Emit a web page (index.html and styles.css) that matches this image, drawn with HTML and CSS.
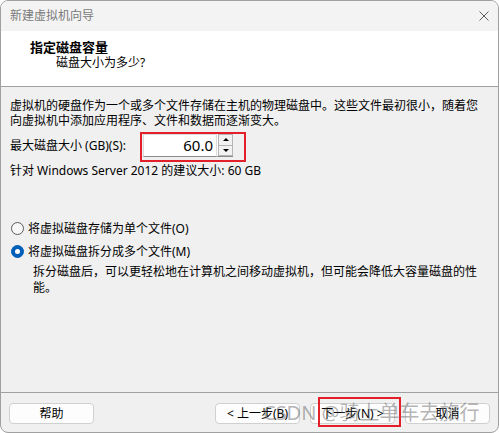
FILE: index.html
```html
<!DOCTYPE html>
<html lang="zh-CN">
<head>
<meta charset="utf-8">
<title>新建虚拟机向导</title>
<link rel="stylesheet" href="styles.css">
</head>
<body>
<div class="window">
  <div class="titlebar">
    <span class="title">新建虚拟机向导</span>
    <svg class="close" width="10" height="10" viewBox="0 0 10 10"><path d="M0.5 0.5 L9.5 9.5 M9.5 0.5 L0.5 9.5" stroke="#5c5c5c" stroke-width="1"/></svg>
  </div>
  <div class="header">
    <div class="h-title">指定磁盘容量</div>
    <div class="h-sub">磁盘大小为多少?</div>
  </div>
  <div class="content">
    <p class="intro">虚拟机的硬盘作为一个或多个文件存储在主机的物理磁盘中。这些文件最初很小，随着您<br>向虚拟机中添加应用程序、文件和数据而逐渐变大。</p>
    <div class="size-row">
      <span class="size-label">最大磁盘大小 (GB)(S):</span>
      <div class="spin">
        <div class="spin-input">60.0</div>
        <div class="spin-btns">
          <span class="spin-btn"><span class="arrow-up"></span></span>
          <span class="spin-btn"><span class="arrow-down"></span></span>
        </div>
      </div>
      <div class="mark mark-spin"></div>
    </div>
    <p class="recommend">针对 Windows Server 2012 的建议大小: 60 GB</p>
    <div class="options">
      <div class="radio-row"><span class="radio"></span>将虚拟磁盘存储为单个文件(O)</div>
      <div class="radio-row second"><span class="radio checked"></span>将虚拟磁盘拆分成多个文件(M)</div>
      <p class="option-desc">拆分磁盘后，可以更轻松地在计算机之间移动虚拟机，但可能会降低大容量磁盘的性<br>能。</p>
    </div>
  </div>
  <div class="footer">
    <button class="btn">帮助</button>
    <div class="nav">
      <button class="btn">&lt; 上一步(B)</button>
      <button class="btn next">下一步(N) &gt;<span class="mark mark-next"></span></button>
      <button class="btn">取消</button>
    </div>
  </div>
  <div class="watermark">CSDN @骑上单车去旅行</div>
</div>
</body>
</html>
```
FILE: styles.css
```css
body {
  margin: 0;
  background: #ffffff;
  font-family: "Noto Sans", "Noto Sans CJK SC", sans-serif;
  font-size: 12px;
  color: #000;
}

.window {
  width: 499px;
  height: 433px;
  box-sizing: border-box;
  border: 1px solid #a0a0a0;
  border-radius: 8px;
  overflow: hidden;
  display: flex;
  flex-direction: column;
  background: #f0f0f0;
  position: relative;
}

.titlebar {
  height: 30px;
  flex: none;
  display: flex;
  align-items: center;
  justify-content: space-between;
  padding: 0 9px 0 9px;
  background: #f3f3f3;
}

.title {
  color: #7a7a7a;
  line-height: 16px;
}

.close {
  display: block;
}

.header {
  height: 56px;
  flex: none;
  box-sizing: border-box;
  background: #ffffff;
  border-bottom: 1px solid #a0a0a0;
  padding: 8px 0 0 29px;
}

.h-title {
  font-weight: bold;
  font-size: 13px;
  line-height: 16px;
}

.h-sub {
  line-height: 16px;
  padding-left: 26px;
}

.content {
  padding: 11px 9px 0 9px;
  flex: 1;
}

.intro {
  margin: 0;
  line-height: 15px;
  white-space: nowrap;
}

.size-row {
  display: flex;
  align-items: center;
  height: 23px;
  margin-top: 6px;
  position: relative;
}

.size-label {
  width: 133px;
  line-height: 15px;
}

.spin {
  display: flex;
  height: 23px;
}

.spin-input {
  width: 74px;
  box-sizing: border-box;
  background: #ffffff;
  border: 1px solid #dcdcdc;
  border-bottom-color: #8a8a8a;
  text-align: right;
  padding-right: 3px;
  font-size: 15px;
  line-height: 21px;
}

.spin-btns {
  width: 16px;
  display: flex;
  flex-direction: column;
  background: #ffffff;
  border-bottom: 1px solid #8a8a8a;
  box-sizing: border-box;
}

.spin-btn {
  flex: 1;
  display: flex;
  align-items: center;
  justify-content: center;
  border: 1px solid #b5b5b5;
  background: #f2f2f2;
  margin: 0 0 0 1px;
}

.spin-btn + .spin-btn {
  border-top: none;
}

.arrow-up {
  width: 0;
  height: 0;
  border-left: 3px solid transparent;
  border-right: 3px solid transparent;
  border-bottom: 3px solid #000;
}

.arrow-down {
  width: 0;
  height: 0;
  border-left: 3px solid transparent;
  border-right: 3px solid transparent;
  border-top: 3px solid #000;
}

.mark {
  position: absolute;
  border: 2px solid #e3202a;
  box-sizing: border-box;
  pointer-events: none;
}

.mark-spin {
  left: 130px;
  top: -2px;
  width: 106px;
  height: 30px;
}

.recommend {
  margin: 6px 0 0;
  line-height: 15px;
}

.options {
  margin-top: 42px;
}

.radio-row {
  display: flex;
  align-items: center;
  height: 16px;
}

.radio-row.second {
  margin-top: 7px;
}

.radio {
  width: 13px;
  height: 13px;
  box-sizing: border-box;
  border: 1px solid #5a5a5a;
  border-radius: 50%;
  background: #f7f7f7;
  margin: 0 4px 0 1px;
  flex: none;
  position: relative;
}

.radio.checked {
  background: #005fb8;
  border-color: #005fb8;
}

.radio.checked::after {
  content: "";
  position: absolute;
  left: 3px;
  top: 3px;
  width: 5px;
  height: 5px;
  border-radius: 50%;
  background: #ffffff;
}

.option-desc {
  margin: 5px 0 0 23px;
  line-height: 15.5px;
  white-space: nowrap;
}

.footer {
  height: 40px;
  flex: none;
  box-sizing: border-box;
  border-top: 1px solid #a0a0a0;
  padding: 10px 8px 0 8px;
  display: flex;
  justify-content: space-between;
  align-items: flex-start;
}

.nav {
  display: flex;
  gap: 10px;
}

.btn {
  width: 85px;
  height: 21px;
  box-sizing: border-box;
  border: 1px solid #d0d0d0;
  border-radius: 4px;
  background: #fdfdfd;
  font-family: inherit;
  font-size: 12px;
  line-height: 17px;
  padding: 0;
  color: #000;
  position: relative;
}

.mark-next {
  left: 7px;
  top: -7px;
  width: 83px;
  height: 30px;
}

.watermark {
  position: absolute;
  left: 262px;
  top: 400px;
  font-size: 20px;
  line-height: 24px;
  color: rgba(90, 90, 90, 0.45);
  white-space: nowrap;
  pointer-events: none;
}
```
